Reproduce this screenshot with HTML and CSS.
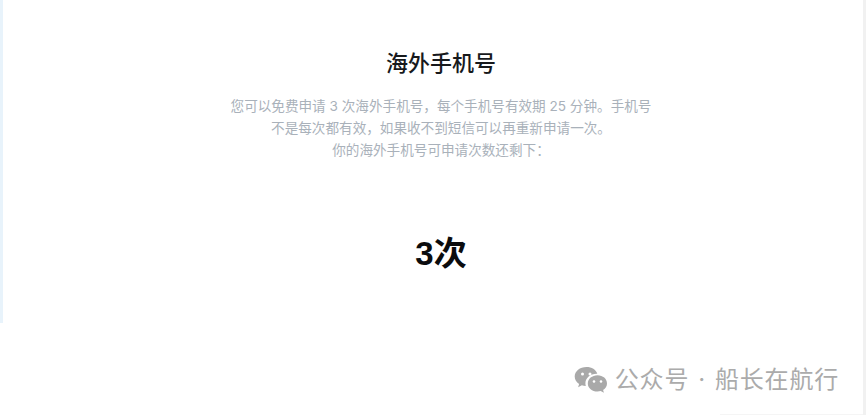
FILE: index.html
```html
<!DOCTYPE html>
<html lang="zh-CN">
<head>
    <meta charset="UTF-8">
    <meta name="viewport" content="width=device-width, initial-scale=1.0">
    <title>海外手机号</title>
    <link rel="stylesheet" href="styles.css">
</head>
<body>

    <div class="tarjeta">
        <h1 class="titulo">海外手机号</h1>
        <p class="texto">您可以免费申请 3 次海外手机号，每个手机号有效期 25 分钟。手机号<br>不是每次都有效，如果收不到短信可以再重新申请一次。<br>你的海外手机号可申请次数还剩下：</p>
        <div class="cuenta">3次</div>
    </div>

    <div class="marca">
        <svg class="marca-icono" viewBox="0 0 34 28" aria-hidden="true">
            <path fill="#a9a9a9" d="M12.500 1C5.900 1 .7 5.200.7 10.500c0 3 1.700 5.600 4.400 7.400l-1 3.400 3.800-2.100c1.200.4 2.500.6 3.900.7-.3-.9-.4-1.800-.4-2.700 0-5.200 5-9.400 11.200-9.400h.7C22 3.700 17.700 1 12.500 1z"/>
            <path fill="#a9a9a9" d="M23.500 9.300c-5.400 0-9.700 3.600-9.700 8.100s4.300 8.100 9.700 8.100c1.100 0 2.200-.2 3.200-.5l3.200 1.800-.8-2.900c2.400-1.500 3.900-3.800 3.900-6.500 0-4.500-4.100-8.100-9.500-8.100z"/>
            <circle cx="8.500" cy="8" r="1.500" fill="#fff"/>
            <circle cx="16" cy="8" r="1.500" fill="#fff"/>
            <circle cx="20" cy="15.500" r="1.300" fill="#fff"/>
            <circle cx="27" cy="15.500" r="1.300" fill="#fff"/>
        </svg>
        <span class="marca-texto">公众号 · 船长在航行</span>
    </div>

    <div class="linea"></div>

</body>
</html>
```

FILE: styles.css
```css
body {
    font-family: 'Inter', 'Noto Sans CJK SC', sans-serif;
    margin: 0;
    height: 415px;
    overflow: hidden;
    background: #fff;
    border-right: 3px solid #f1f1f1;
    box-sizing: border-box;
}

.tarjeta {
    height: 323px;
    box-sizing: border-box;
    padding: 48px 0 0 16px;
    border-left: 3px solid #e8f3fb;
    text-align: center;
}

.titulo {
    margin: 0;
    font-size: 22px;
    line-height: 30px;
    font-weight: 500;
    color: #17191c;
}

.texto {
    margin: 17px 0 0;
    font-size: 13.6px;
    line-height: 22px;
    color: #a9b1ba;
}

.cuenta {
    margin-top: 71px;
    font-family: 'Liberation Sans', 'Noto Sans CJK SC', sans-serif;
    font-size: 33px;
    line-height: 44px;
    font-weight: 700;
    color: #0b0c0e;
}

.marca {
    display: flex;
    justify-content: flex-end;
    align-items: center;
    gap: 7px;
    padding: 42px 24px 0 0;
}

.marca-icono {
    width: 34px;
    height: 28px;
}

.marca-texto {
    font-size: 24px;
    line-height: 30px;
    letter-spacing: 0.8px;
    word-spacing: 1.5px;
    color: #ababab;
}

.linea {
    height: 1px;
    margin: 19px 0 0 720px;
    background: #f5f5f5;
}
```
